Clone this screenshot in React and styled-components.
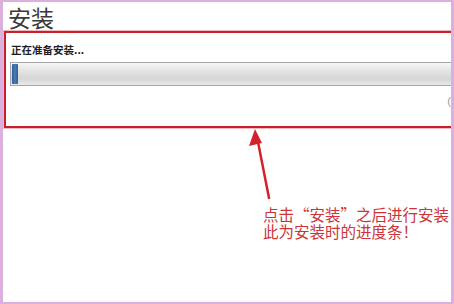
import styled, { createGlobalStyle } from 'styled-components'

const GlobalStyle = createGlobalStyle`
  html, body {
    margin: 0;
    padding: 0;
    background: #ffffff;
  }
  body {
    font-family: "Liberation Sans", "Noto Sans CJK SC", sans-serif;
  }
`

const Frame = styled.div`
  box-sizing: border-box;
  width: 454px;
  height: 304px;
  border-style: solid;
  border-color: #dbb0df;
  border-width: 2px 3px 2px 3px;
  background: #ffffff;
  overflow: hidden;
`

const Title = styled.h1`
  margin: 0;
  padding: 1px 0 0 5px;
  height: 28px;
  font-family: "Noto Sans CJK SC", sans-serif;
  font-size: 23px;
  line-height: 28px;
  font-weight: 400;
  color: #3a3a3a;
`

// the box runs on past the right edge of the frame in the screenshot
const Panel = styled.section`
  box-sizing: border-box;
  width: 490px;
  height: 97px;
  margin-left: 1px;
  border: 2px solid #c8202a;
  box-shadow: 0 0 0 1px #f1b8b8;
  padding: 10px 0 0 4px;
  display: flex;
  flex-direction: column;
`

const Status = styled.div`
  font-family: "Noto Sans CJK SC", sans-serif;
  font-size: 10.5px;
  line-height: 14px;
  font-weight: 700;
  color: #1e1e1e;
  padding-left: 1px;
`

const Track = styled.div`
  box-sizing: border-box;
  height: 24px;
  margin-top: 5px;
  border: 1px solid #a6a6a6;
  background: linear-gradient(#f6f6f6 0%, #e4e4e4 35%, #d6d6d6 70%, #e8e8e8 100%);
  padding: 1px;
  display: flex;
`

const Chunk = styled.div`
  width: 6px;
  background: linear-gradient(90deg, #2c5d93, #4a7db5 50%, #2c5d93);
  border-radius: 1px;
`

const Remaining = styled.div`
  display: flex;
  justify-content: flex-end;
  padding-right: 41px;
  margin-top: 9px;
  font-size: 11px;
  line-height: 12px;
  color: #9a9a9a;
`

const Note = styled.div`
  margin-left: 242px;
  display: flex;
  flex-direction: column;
`

const Arrow = styled.svg`
  display: block;
  width: 32px;
  height: 78px;
`

const NoteText = styled.p`
  margin: 0 0 0 18px;
  font-family: "Noto Sans CJK SC", sans-serif;
  font-size: 15.5px;
  line-height: 17px;
  color: #cc3437;
  white-space: nowrap;
`

export default function App() {
  return (
    <>
      <GlobalStyle />
      <Frame>
        <Title>安装</Title>
        <Panel>
          <Status>正在准备安装...</Status>
          <Track>
            <Chunk />
          </Track>
          <Remaining>(</Remaining>
        </Panel>
        <Note>
          <Arrow viewBox="0 0 32 78">
            <line x1="24" y1="70" x2="13" y2="14" stroke="#d3222b" strokeWidth="2.5" strokeLinecap="round" />
            <polygon points="10,1 4,18 17,15" fill="#d3222b" />
          </Arrow>
          <NoteText>
            点击“安装”之后进行安装
            <br />
            此为安装时的进度条！
          </NoteText>
        </Note>
      </Frame>
    </>
  )
}
